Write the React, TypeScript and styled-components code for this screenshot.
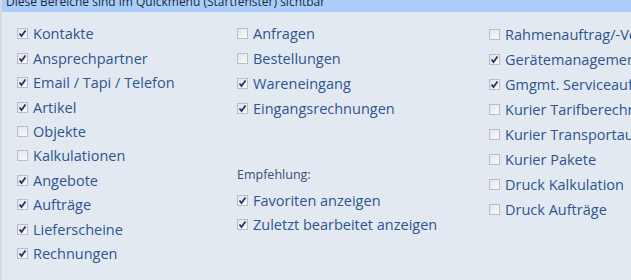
import React from 'react'
import styled, { createGlobalStyle } from 'styled-components'

const GlobalStyle = createGlobalStyle`
  html, body { margin: 0; padding: 0; }
  body {
    width: 631px;
    height: 280px;
    overflow: hidden;
    background: #e3e9f1;
    font-family: 'Open Sans', 'Noto Sans', sans-serif;
  }
`

const StyledPanel = styled.div`
  width: 631px;
  height: 280px;
  overflow: hidden;
  background: #e3e9f1;
  border-left: 2px solid #d3dbe6;
  box-sizing: border-box;
`
const StyledHeader = styled.div`
  height: 12px;
  background: #aacdfa;
  overflow: hidden;
  font-size: 12px;
  line-height: 12px;
  color: #1e2a3a;
  padding-left: 4px;
  white-space: nowrap;
`
const StyledHeaderText = styled.div`
  margin-top: -4px;
`
const StyledColumns = styled.div`
  display: grid;
  grid-template-columns: 220px 252px 1fr;
  padding: 9.5px 0 0 15px;
`
const StyledColumn = styled.div`
  display: flex;
  flex-direction: column;
`
const StyledRow = styled.label<{ $height: number }>`
  display: flex;
  align-items: center;
  gap: 5px;
  height: ${props => props.$height}px;
  white-space: nowrap;
  font-size: 14.5px;
  color: #2d5590;
`
const StyledBox = styled.span`
  width: 9px;
  height: 9px;
  flex: none;
  border: 1px solid #b9bec6;
  background: linear-gradient(135deg, #e3e5e9, #fafafa);
  display: flex;
  align-items: center;
  justify-content: center;
`
const StyledHint = styled.div`
  font-size: 12.5px;
  color: #35507a;
  height: 27.5px;
  line-height: 27.5px;
  margin-top: 40px;
`

const Checkbox: React.FC<{ checked?: boolean }> = ({ checked }) => (
  <StyledBox>
    {checked && (
      <svg width="9" height="9" viewBox="0 0 9 9">
        <path d="M1.5 4.5 L3.5 7 L7.5 1.5" fill="none" stroke="#2a2f6e" strokeWidth="1.8" />
      </svg>
    )}
  </StyledBox>
)

type Item = { label: string; checked: boolean }

const col1: Item[] = [
  { label: 'Kontakte', checked: true },
  { label: 'Ansprechpartner', checked: true },
  { label: 'Email / Tapi / Telefon', checked: true },
  { label: 'Artikel', checked: true },
  { label: 'Objekte', checked: false },
  { label: 'Kalkulationen', checked: false },
  { label: 'Angebote', checked: true },
  { label: 'Aufträge', checked: true },
  { label: 'Lieferscheine', checked: true },
  { label: 'Rechnungen', checked: true }
]
const col2: Item[] = [
  { label: 'Anfragen', checked: false },
  { label: 'Bestellungen', checked: false },
  { label: 'Wareneingang', checked: true },
  { label: 'Eingangsrechnungen', checked: true }
]
const col2b: Item[] = [
  { label: 'Favoriten anzeigen', checked: true },
  { label: 'Zuletzt bearbeitet anzeigen', checked: true }
]
const col3: Item[] = [
  { label: 'Rahmenauftrag/-Vertrag', checked: false },
  { label: 'Gerätemanagement', checked: true },
  { label: 'Gmgmt. Serviceaufträge', checked: true },
  { label: 'Kurier Tarifberechnung', checked: false },
  { label: 'Kurier Transportaufträge', checked: false },
  { label: 'Kurier Pakete', checked: false },
  { label: 'Druck Kalkulation', checked: false },
  { label: 'Druck Aufträge', checked: false }
]

const renderRows = (items: Item[], height: number) =>
  items.map(item => (
    <StyledRow key={item.label} $height={height}>
      <Checkbox checked={item.checked} />
      {item.label}
    </StyledRow>
  ))

const App: React.FC = () => (
  <>
    <GlobalStyle />
    <StyledPanel>
      <StyledHeader>
        <StyledHeaderText>Diese Bereiche sind im Quickmenu (Startfenster) sichtbar</StyledHeaderText>
      </StyledHeader>
      <StyledColumns>
        <StyledColumn>{renderRows(col1, 24.45)}</StyledColumn>
        <StyledColumn>
          {renderRows(col2, 24.8)}
          <StyledHint>Empfehlung:</StyledHint>
          {renderRows(col2b, 24.5)}
        </StyledColumn>
        <StyledColumn>{renderRows(col3, 25)}</StyledColumn>
      </StyledColumns>
    </StyledPanel>
  </>
)

export default App
